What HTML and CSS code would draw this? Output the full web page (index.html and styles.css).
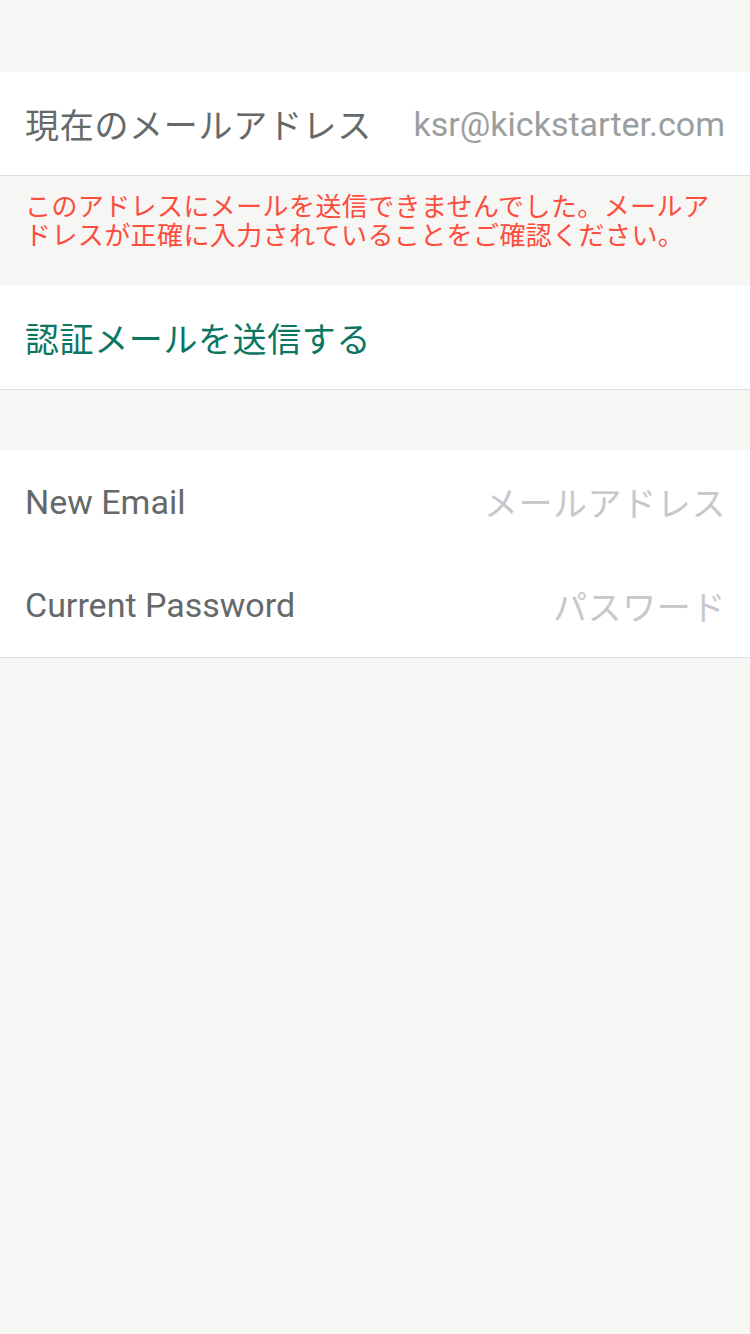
FILE: index.html
```html
<!DOCTYPE html>
<html lang="ja">
<head>
<meta charset="utf-8">
<title>メールアドレス変更</title>
<link rel="stylesheet" href="styles.css">
</head>
<body>
<div class="page">
  <div class="top-gap"></div>
  <section class="group">
    <div class="row">
      <span class="label">現在のメールアドレス</span>
      <span class="value">ksr@kickstarter.com</span>
    </div>
  </section>
  <p class="error">このアドレスにメールを送信できませんでした。メールアドレスが正確に入力されていることをご確認ください。</p>
  <section class="group">
    <div class="row">
      <span class="action">認証メールを送信する</span>
    </div>
  </section>
  <div class="gap"></div>
  <section class="group">
    <div class="row">
      <span class="label latin">New Email</span>
      <span class="placeholder">メールアドレス</span>
    </div>
    <div class="row row-tall">
      <span class="label latin">Current Password</span>
      <span class="placeholder">パスワード</span>
    </div>
  </section>
</div>
</body>
</html>
```
FILE: styles.css
```css
html, body {
  margin: 0;
  padding: 0;
}
body {
  background: #f6f6f4;
  font-family: Roboto, "Noto Sans CJK JP", sans-serif;
  width: 750px;
  height: 1334px;
}
.page {
  display: flex;
  flex-direction: column;
}
.top-gap {
  height: 72px;
}
.gap {
  height: 60px;
}
.group {
  background: #ffffff;
  border-bottom: 1px solid #dcdcdc;
}
.row {
  height: 103px;
  padding: 0 25px;
  display: flex;
  align-items: center;
  justify-content: space-between;
  font-size: 34px;
}
.row-tall {
  height: 104px;
}
.label {
  color: #656969;
  font-family: "Noto Sans CJK JP", sans-serif;
  letter-spacing: 0.7px;
}
.label.latin {
  font-family: Roboto, "Noto Sans CJK JP", sans-serif;
  letter-spacing: 0;
}
.value {
  color: #9b9e9e;
  font-family: Roboto, sans-serif;
}
.placeholder {
  color: #c7c7cc;
  font-family: "Noto Sans CJK JP", sans-serif;
  letter-spacing: 0.6px;
  margin-right: -1px;
}
.action {
  color: #0b7763;
  font-family: "Noto Sans CJK JP", sans-serif;
  letter-spacing: 0.6px;
}
.error {
  margin: 0;
  padding: 14px 25px 38px;
  font-family: "Noto Sans CJK JP", sans-serif;
  font-size: 26px;
  line-height: 29px;
  letter-spacing: 0.4px;
  color: #fd4d3e;
}
```
